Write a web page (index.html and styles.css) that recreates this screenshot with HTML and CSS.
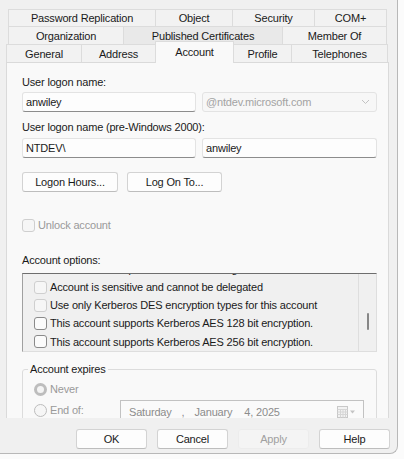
FILE: index.html
```html
<!DOCTYPE html>
<html lang="en">
<head>
    <meta charset="UTF-8">
    <meta name="viewport" content="width=device-width, initial-scale=1.0">
    <title>anwiley Properties</title>
    <link rel="stylesheet" href="styles.css">
</head>
<body>
    <div class="window">
        <div class="tabs">
            <div class="tab-row row-top">
                <div class="tab w-pwd">Password Replication</div>
                <div class="tab w-object">Object</div>
                <div class="tab w-security">Security</div>
                <div class="tab w-com">COM+</div>
            </div>
            <div class="tab-row row-mid">
                <div class="tab w-org">Organization</div>
                <div class="tab tab-hover w-certs">Published Certificates</div>
                <div class="tab w-member">Member Of</div>
            </div>
            <div class="tab-row row-front">
                <div class="tab w-general">General</div>
                <div class="tab w-address">Address</div>
                <div class="tab tab-active w-account">Account</div>
                <div class="tab w-profile">Profile</div>
                <div class="tab w-phones">Telephones</div>
            </div>
        </div>

        <div class="panel">
            <div class="field-label">User logon name:</div>
            <div class="input-row">
                <div class="box w-left">anwiley</div>
                <div class="box combo w-right">
                    <span>@ntdev.microsoft.com</span>
                    <svg class="chevron" width="9" height="6" viewBox="0 0 9 6"><path d="M1 1l3.5 3.5L8 1" fill="none" stroke="#c2c2c2" stroke-width="1"/></svg>
                </div>
            </div>

            <div class="field-label gap-label">User logon name (pre-Windows 2000):</div>
            <div class="input-row row-pre">
                <div class="box w-left">NTDEV\</div>
                <div class="box w-right">anwiley</div>
            </div>

            <div class="button-row">
                <button class="btn w-hours">Logon Hours...</button>
                <button class="btn w-logon">Log On To...</button>
            </div>

            <div class="check-row unlock disabled">
                <span class="check"></span>
                <span>Unlock account</span>
            </div>

            <div class="field-label gap-options">Account options:</div>
            <div class="listbox">
                <div class="list-view">
                    <div class="list-inner">
                        <div class="list-item scrolled-off"><span class="check"></span>Smart card is required for interactive logon</div>
                        <div class="list-item"><span class="check faint"></span>Account is sensitive and cannot be delegated</div>
                        <div class="list-item"><span class="check faint"></span>Use only Kerberos DES encryption types for this account</div>
                        <div class="list-item"><span class="check"></span>This account supports Kerberos AES 128 bit encryption.</div>
                        <div class="list-item"><span class="check"></span>This account supports Kerberos AES 256 bit encryption.</div>
                    </div>
                </div>
                <div class="scrollbar">
                    <div class="thumb"></div>
                </div>
            </div>

            <fieldset class="group">
                <legend>Account expires</legend>
                <div class="radio-row disabled">
                    <span class="radio checked"></span>
                    <span>Never</span>
                </div>
                <div class="radio-row end-row disabled">
                    <span class="radio"></span>
                    <span>End of:</span>
                    <div class="date-picker">
                        <span class="d-day">Saturday</span>
                        <span class="d-comma">,</span>
                        <span class="d-month">January</span>
                        <span class="d-date">4, 2025</span>
                        <svg class="cal" width="20" height="12" viewBox="0 0 20 12">
                            <rect x="0.5" y="0.5" width="10" height="11" fill="#f2f2f2" stroke="#c8c8c8"/>
                            <path d="M0.5 3.5h10M0.5 6h10M0.5 8.5h10M3.5 3.5v8M6 3.5v8M8.5 3.5v8" stroke="#d6d6d6" stroke-width="1"/>
                            <path d="M13 4.5h5l-2.5 3z" fill="#c4c4c4"/>
                        </svg>
                    </div>
                </div>
            </fieldset>
        </div>

        <div class="dialog-buttons">
            <button class="btn dlg">OK</button>
            <button class="btn dlg">Cancel</button>
            <button class="btn dlg btn-disabled">Apply</button>
            <button class="btn dlg">Help</button>
        </div>
    </div>
</body>
</html>
```

FILE: styles.css
```css
* {
    box-sizing: border-box;
}

body {
    margin: 0;
    background: #fbfbfb;
    font-family: "Liberation Sans", Arial, sans-serif;
    font-size: 11px;
    letter-spacing: -0.18px;
    color: #1a1a1a;
}

.window {
    width: 398px;
    height: 454px;
    padding-top: 9px;
    background: #f0f0f0;
    border-right: 1px solid #b8b8b8;
    border-bottom: 1px solid #b8b8b8;
    border-bottom-right-radius: 8px;
    overflow: hidden;
}

/* Tabs */
.tab-row {
    display: flex;
    height: 18px;
    margin-left: 8px;
    width: 379px;
}

.row-top {
    height: 17px;
}

.row-front {
    margin-left: 6px;
    width: 382px;
    align-items: flex-end;
}

.tab {
    height: 100%;
    display: flex;
    align-items: center;
    justify-content: center;
    background: #f2f2f2;
    border-top: 1px solid #dcdcdc;
    border-left: 1px solid #dcdcdc;
    white-space: nowrap;
}

.tab:last-child {
    border-right: 1px solid #dcdcdc;
}

.tab-hover {
    background: #e9e9e9;
}

.tab-active {
    position: relative;
    z-index: 2;
    height: 22px;
    margin-top: -4px;
    margin-bottom: -1px;
    padding-bottom: 1px;
    background: #f9f9f9;
    border-right: 1px solid #dcdcdc;
}

.tab-active + .tab {
    border-left: none;
}

.w-pwd { width: 147px; }
.w-object { width: 77px; }
.w-security { width: 82px; }
.w-com { width: 73px; }
.w-org { width: 115px; }
.w-certs { width: 159px; }
.w-member { width: 105px; }
.w-general { width: 75px; }
.w-address { width: 74px; }
.w-account { width: 79px; }
.w-profile { width: 57px; }
.w-phones { width: 97px; }

/* Panel */
.panel {
    margin-left: 6px;
    width: 383px;
    height: 356px;
    padding: 12px 10px 0 15px;
    background: #f9f9f9;
    border: 1px solid #dadada;
    border-bottom: none;
    overflow: hidden;
}

.field-label {
    line-height: 14px;
}

.gap-label {
    margin-top: 8px;
}

.input-row {
    display: flex;
    gap: 6px;
    margin-top: 3px;
}

.row-pre {
    margin-top: 4px;
}

.box {
    height: 20px;
    display: flex;
    align-items: center;
    padding-left: 3px;
    background: #fdfdfd;
    border: 1px solid #e3e3e3;
    border-bottom-color: #8c8c8c;
    border-radius: 3px;
}

.w-left { width: 174px; }
.w-right { width: 175px; }

.combo {
    justify-content: space-between;
    padding-right: 6px;
    color: #a3a3a3;
    background: #f7f7f7;
    border-bottom-color: #e3e3e3;
}

.button-row {
    display: flex;
    gap: 9px;
    margin-top: 14px;
}

.btn {
    height: 20px;
    padding: 0;
    font-family: inherit;
    font-size: 11px;
    letter-spacing: inherit;
    color: #1a1a1a;
    background: #fdfdfd;
    border: 1px solid #d3d3d3;
    border-bottom-color: #bdbdbd;
    border-radius: 3px;
}

.w-hours { width: 96px; }
.w-logon { width: 95px; }

/* Checkboxes */
.check-row {
    display: flex;
    align-items: center;
    gap: 3px;
    height: 14px;
}

.unlock {
    margin-top: 26px;
}

.check {
    flex: none;
    width: 13px;
    height: 13px;
    background: #fbfbfb;
    border: 1px solid #8a8a8a;
    border-radius: 3px;
}

.disabled {
    color: #9a9a9a;
}

.disabled .check,
.check.faint {
    border-color: #cfcfcf;
    background: #f6f6f6;
}

.gap-options {
    margin-top: 21px;
}

/* Account options list */
.listbox {
    display: flex;
    width: 355px;
    height: 79px;
    margin-top: 6px;
    background: #f0f0f0;
    border-top: 1px solid #6e6e6e;
    border-left: 1px solid #a0a0a0;
    border-right: 1px solid #dedede;
    border-bottom: 1px solid #dedede;
}

.list-view {
    flex: 1;
    overflow: hidden;
    border-right: 1px solid #dedede;
}

.list-inner {
    margin-top: -14px;
}

.list-item {
    display: flex;
    align-items: center;
    gap: 3px;
    height: 18px;
    padding-left: 11px;
    white-space: nowrap;
}

.scrolled-off .check {
    align-self: flex-start;
}

.list-item:nth-child(5) {
    height: 19px;
}

.scrollbar {
    width: 17px;
    display: flex;
    justify-content: center;
    padding-top: 39px;
}

.thumb {
    width: 2px;
    height: 17px;
    background: #878787;
    border-radius: 1px;
}

/* Account expires */
.group {
    width: 355px;
    margin: 10px 0 0;
    padding: 0 12px 0 11px;
    border: 1px solid #dcdcdc;
    border-radius: 3px;
}

.group legend {
    margin-left: -6px;
    padding: 0 2px;
    line-height: 14px;
    color: #1a1a1a;
}

.radio-row {
    display: flex;
    align-items: center;
    gap: 3px;
    height: 14px;
    margin-top: 6px;
}

.radio {
    flex: none;
    width: 13px;
    height: 13px;
    border: 1px solid #bcbcbc;
    border-radius: 50%;
    background: #f6f6f6;
}

.radio.checked {
    border: 3px solid #bdbdbd;
    background: #f4f4f4;
}

.end-row {
    height: 20px;
    margin-top: 4px;
}

.date-picker {
    display: flex;
    align-items: center;
    width: 244px;
    height: 22px;
    margin-left: auto;
    margin-top: 2px;
    padding-left: 8px;
    color: #8c8c8c;
    background: #fafafa;
    border: 1px solid #c2c2c2;
    border-bottom: none;
}

.d-comma { margin-left: 10px; }
.d-month { margin-left: 10px; }
.d-date { margin-left: 12px; }

.cal {
    margin-left: auto;
    margin-right: 6px;
}

/* Dialog buttons */
.dialog-buttons {
    display: flex;
    justify-content: flex-end;
    gap: 10px;
    padding: 11px 7px 0 0;
}

.dlg {
    width: 71px;
}

.btn-disabled {
    color: #a0a0a0;
    background: #f4f4f4;
    border-color: #ececec;
}
```
